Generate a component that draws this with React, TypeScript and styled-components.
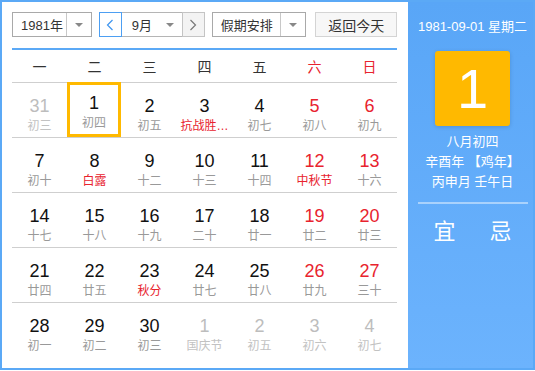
import styled, { createGlobalStyle, css } from 'styled-components'

const GlobalStyle = createGlobalStyle`
  html, body {
    margin: 0;
    padding: 0;
    background: #fff;
  }
  body {
    font-family: 'Liberation Sans', 'Noto Sans CJK SC', sans-serif;
  }
`

const RED = '#e8232e'
const BLUE = '#5ba9f6'
const ORANGE = '#ffb900'

const CalendarBox = styled.div`
  display: flex;
  width: 535px;
  height: 370px;
  box-sizing: border-box;
  border: 2px solid ${BLUE};
`

const MainPane = styled.div`
  width: 406px;
  box-sizing: border-box;
  padding: 10px 11px 0 10px;
  background: #fff;
`

const Toolbar = styled.div`
  display: flex;
  align-items: center;
  height: 25px;
  font-size: 13px;
  color: #333;
`

const SelectBox = styled.div<{ $w: number; $divider?: boolean }>`
  display: flex;
  align-items: center;
  width: ${(p) => p.$w}px;
  height: 25px;
  box-sizing: border-box;
  border: 1px solid #a9a9a9;
  background: #fff;

  .value {
    flex: 1;
    padding-left: 8px;
  }

  .arrow {
    display: flex;
    align-items: center;
    justify-content: center;
    width: 24px;
    height: 100%;
    ${(p) =>
      p.$divider &&
      css`
        border-left: 1px solid #c8c8c8;
      `}
    &::after {
      content: '';
      border-left: 4px solid transparent;
      border-right: 4px solid transparent;
      border-top: 4px solid #888;
    }
  }
`

const MonthGroup = styled.div`
  display: flex;
  margin-left: 7px;
  height: 25px;
`

const NavButton = styled.div<{ $active?: boolean }>`
  display: flex;
  align-items: center;
  justify-content: center;
  width: 23px;
  height: 25px;
  box-sizing: border-box;
  border: 1px solid ${(p) => (p.$active ? '#4d9ff2' : '#c4c4c4')};
  background: ${(p) => (p.$active ? '#fff' : '#f3f3f3')};
  color: ${(p) => (p.$active ? '#3f95ef' : '#777')};
`

const MonthSelect = styled(SelectBox)`
  border-left: none;
  border-right: none;
  border-color: #b5b5b5;
  .value {
    padding-left: 10px;
  }
`

const Gap = styled.div<{ $w: number }>`
  width: ${(p) => p.$w}px;
`

const TodayButton = styled.div`
  display: flex;
  align-items: center;
  justify-content: center;
  width: 82px;
  height: 25px;
  box-sizing: border-box;
  border: 1px solid #d4d4d4;
  background: #f7f7f7;
  font-size: 14px;
  color: #333;
`

const HeadRow = styled.div`
  display: grid;
  grid-template-columns: repeat(7, 55px);
  height: 32px;
  margin-top: 11px;
  border-top: 2px solid ${BLUE};
  border-bottom: 1px solid #cfcfcf;
`

const HeadCell = styled.div<{ $weekend?: boolean }>`
  display: flex;
  align-items: center;
  justify-content: center;
  font-size: 14px;
  color: ${(p) => (p.$weekend ? RED : '#333')};
`

const WeekRow = styled.div<{ $last?: boolean }>`
  display: grid;
  grid-template-columns: repeat(7, 55px);
  height: 54px;
  border-bottom: 1px solid ${(p) => (p.$last ? 'transparent' : '#cfcfcf')};
`

const DayCell = styled.div<{ $selected?: boolean }>`
  display: flex;
  flex-direction: column;
  align-items: center;
  box-sizing: border-box;
  padding-top: 9px;
  border: 3px solid ${(p) => (p.$selected ? ORANGE : 'transparent')};
  ${(p) =>
    p.$selected &&
    css`
      height: 55px;
      margin-top: -1px;
      margin-right: 1px;
      padding-top: 7px;
    `}
`

const DayNum = styled.div<{ $tone: Tone }>`
  font-size: 18px;
  line-height: 22px;
  color: ${(p) => (p.$tone === 'red' ? RED : p.$tone === 'dim' ? '#bdbdbd' : '#111')};
`

const Lunar = styled.div<{ $tone: Tone }>`
  font-size: 12px;
  line-height: 18px;
  white-space: nowrap;
  color: ${(p) => (p.$tone === 'red' ? RED : p.$tone === 'dim' ? '#c2c2c2' : '#999')};
`

const SidePane = styled.div`
  flex: 1;
  display: flex;
  flex-direction: column;
  align-items: center;
  padding-left: 4px;
  background: linear-gradient(180deg, #59a6f7 0%, #6cb3fd 100%);
  color: #fff;
`

const SideDate = styled.div`
  margin-top: 16px;
  font-size: 13px;
  line-height: 18px;
`

const BigDay = styled.div`
  display: flex;
  align-items: center;
  justify-content: center;
  width: 75px;
  height: 75px;
  margin-top: 15px;
  border-radius: 3px;
  background: ${ORANGE};
  box-shadow: 0 1px 4px rgba(0, 0, 0, 0.15);
  font-size: 56px;
  line-height: 1;
  font-weight: 300;
`

const SideInfo = styled.div`
  margin-top: 6px;
  display: flex;
  flex-direction: column;
  align-items: center;
  font-size: 13px;
  line-height: 20px;
`

const SideDivider = styled.div`
  width: 110px;
  height: 2px;
  margin-top: 10px;
  background: rgba(255, 255, 255, 0.45);
`

const YiJi = styled.div`
  display: flex;
  gap: 34px;
  margin-top: 15px;
  font-size: 22px;
  line-height: 26px;
`

type Tone = 'normal' | 'red' | 'dim'

interface Day {
  n: number
  lunar: string
  numTone?: Tone
  lunarTone?: Tone
  selected?: boolean
}

const weeks: Day[][] = [
  [
    { n: 31, lunar: '初三', numTone: 'dim', lunarTone: 'dim' },
    { n: 1, lunar: '初四', selected: true },
    { n: 2, lunar: '初五' },
    { n: 3, lunar: '抗战胜…', lunarTone: 'red' },
    { n: 4, lunar: '初七' },
    { n: 5, lunar: '初八', numTone: 'red' },
    { n: 6, lunar: '初九', numTone: 'red' },
  ],
  [
    { n: 7, lunar: '初十' },
    { n: 8, lunar: '白露', lunarTone: 'red' },
    { n: 9, lunar: '十二' },
    { n: 10, lunar: '十三' },
    { n: 11, lunar: '十四' },
    { n: 12, lunar: '中秋节', numTone: 'red', lunarTone: 'red' },
    { n: 13, lunar: '十六', numTone: 'red' },
  ],
  [
    { n: 14, lunar: '十七' },
    { n: 15, lunar: '十八' },
    { n: 16, lunar: '十九' },
    { n: 17, lunar: '二十' },
    { n: 18, lunar: '廿一' },
    { n: 19, lunar: '廿二', numTone: 'red' },
    { n: 20, lunar: '廿三', numTone: 'red' },
  ],
  [
    { n: 21, lunar: '廿四' },
    { n: 22, lunar: '廿五' },
    { n: 23, lunar: '秋分', lunarTone: 'red' },
    { n: 24, lunar: '廿七' },
    { n: 25, lunar: '廿八' },
    { n: 26, lunar: '廿九', numTone: 'red' },
    { n: 27, lunar: '三十', numTone: 'red' },
  ],
  [
    { n: 28, lunar: '初一' },
    { n: 29, lunar: '初二' },
    { n: 30, lunar: '初三' },
    { n: 1, lunar: '国庆节', numTone: 'dim', lunarTone: 'dim' },
    { n: 2, lunar: '初五', numTone: 'dim', lunarTone: 'dim' },
    { n: 3, lunar: '初六', numTone: 'dim', lunarTone: 'dim' },
    { n: 4, lunar: '初七', numTone: 'dim', lunarTone: 'dim' },
  ],
]

const weekdays = ['一', '二', '三', '四', '五', '六', '日']

function Chevron({ dir }: { dir: 'left' | 'right' }) {
  return (
    <svg width="8" height="12" viewBox="0 0 8 12">
      <path
        d={dir === 'left' ? 'M6.5 1 L1.5 6 L6.5 11' : 'M1.5 1 L6.5 6 L1.5 11'}
        fill="none"
        stroke="currentColor"
        strokeWidth="1.2"
      />
    </svg>
  )
}

function ToolbarRow() {
  return (
    <Toolbar>
      <SelectBox $w={80} $divider>
        <span className="value">1981年</span>
        <span className="arrow" />
      </SelectBox>
      <MonthGroup>
        <NavButton $active>
          <Chevron dir="left" />
        </NavButton>
        <MonthSelect $w={60}>
          <span className="value">9月</span>
          <span className="arrow" />
        </MonthSelect>
        <NavButton>
          <Chevron dir="right" />
        </NavButton>
      </MonthGroup>
      <Gap $w={7} />
      <SelectBox $w={95} $divider>
        <span className="value">假期安排</span>
        <span className="arrow" />
      </SelectBox>
      <Gap $w={9} />
      <TodayButton>返回今天</TodayButton>
    </Toolbar>
  )
}

export default function App() {
  return (
    <>
      <GlobalStyle />
      <CalendarBox>
        <MainPane>
          <ToolbarRow />
          <HeadRow>
            {weekdays.map((w, i) => (
              <HeadCell key={w} $weekend={i >= 5}>
                {w}
              </HeadCell>
            ))}
          </HeadRow>
          {weeks.map((week, wi) => (
            <WeekRow key={wi} $last={wi === weeks.length - 1}>
              {week.map((d, di) => (
                <DayCell key={di} $selected={d.selected}>
                  <DayNum $tone={d.numTone ?? 'normal'}>{d.n}</DayNum>
                  <Lunar $tone={d.lunarTone ?? 'normal'}>{d.lunar}</Lunar>
                </DayCell>
              ))}
            </WeekRow>
          ))}
        </MainPane>
        <SidePane>
          <SideDate>1981-09-01 星期二</SideDate>
          <BigDay>1</BigDay>
          <SideInfo>
            <span>八月初四</span>
            <span>辛酉年 【鸡年】</span>
            <span>丙申月 壬午日</span>
          </SideInfo>
          <SideDivider />
          <YiJi>
            <span>宜</span>
            <span>忌</span>
          </YiJi>
        </SidePane>
      </CalendarBox>
    </>
  )
}
